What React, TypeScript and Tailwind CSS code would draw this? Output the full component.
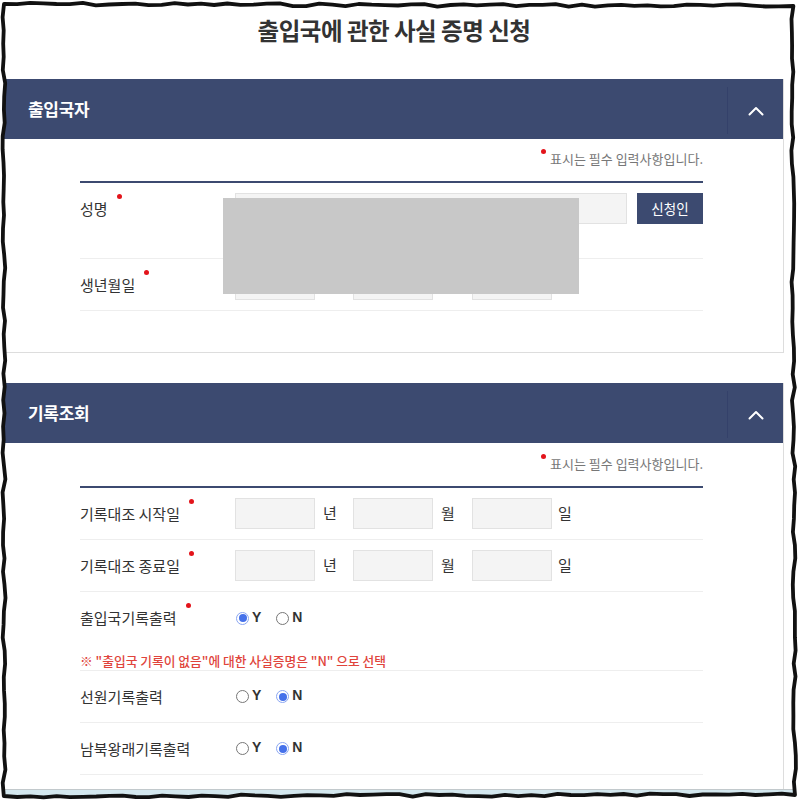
import React from "react";

const NAVY = "bg-[#3c4a70]";
const font = { fontFamily: '"Noto Sans CJK KR", "Noto Sans", sans-serif' };

function Dot() {
    return <span className="inline-block w-[5px] h-[5px] rounded-full bg-[#e3141b] ml-[9px] mt-[-5px] shrink-0" />;
}

function Label({ text, required }: { text: string; required?: boolean }) {
    return (
        <div className="w-[155px] shrink-0 flex items-start text-[15px] leading-[20px] text-[#333]">
            <span>{text}</span>
            {required && <Dot />}
        </div>
    );
}

function Box({ className = "" }: { className?: string }) {
    return <div className={`h-[31px] bg-[#f4f4f4] border border-[#e2e2e2] ${className}`} />;
}

function DateInputs() {
    return (
        <div className="flex items-center text-[15px] text-[#333]">
            <Box className="w-[80px]" />
            <span className="w-[38px] pl-[8px]">년</span>
            <Box className="w-[80px]" />
            <span className="w-[39px] pl-[8px]">월</span>
            <Box className="w-[80px]" />
            <span className="pl-[6px]">일</span>
        </div>
    );
}

function Radio({ checked, label }: { checked?: boolean; label: string }) {
    return (
        <div className="flex items-center">
            {checked ? (
                <span className="w-[13px] h-[13px] rounded-full border border-[#8aa6f2] bg-white flex items-center justify-center">
                    <span className="w-[8px] h-[8px] rounded-full bg-[#4571ea]" />
                </span>
            ) : (
                <span className="w-[13px] h-[13px] rounded-full border border-[#777] bg-white" />
            )}
            <span className="ml-[3px] text-[14px] font-bold text-[#333] leading-none -mt-[3px]" style={{ fontFamily: '"Liberation Sans", Arial, sans-serif' }}>{label}</span>
        </div>
    );
}

function YN({ yes }: { yes: boolean }) {
    return (
        <div className="flex items-center gap-[15px] pl-[1px]">
            <Radio checked={yes} label="Y" />
            <Radio checked={!yes} label="N" />
        </div>
    );
}

function Row({ children, className = "" }: { children: React.ReactNode; className?: string }) {
    return <div className={`flex items-center h-[52px] border-b border-[#eeeeee] ${className}`}>{children}</div>;
}

function Chevron() {
    return (
        <svg width="16" height="10" viewBox="0 0 16 10" fill="none">
            <path d="M1.5 8.5 L8 2 L14.5 8.5" stroke="#fff" strokeWidth="2" strokeLinecap="round" strokeLinejoin="round" />
        </svg>
    );
}

function PanelHeader({ title }: { title: string }) {
    return (
        <div className={`${NAVY} h-[60px] flex items-center`}>
            <h2 className="flex-1 pl-[24px] text-white text-[17px] font-bold tracking-[-0.3px]">{title}</h2>
            <div className="h-[47px] w-[56px] border-l border-[#34416a] flex items-center justify-center mt-[3px]">
                <Chevron />
            </div>
        </div>
    );
}

function RequiredNote() {
    return (
        <div className="flex justify-end items-start text-[13px] leading-[16px] text-[#777]">
            <span className="inline-block w-[5px] h-[5px] rounded-full bg-[#e3141b] mr-[4px] mt-[-2px]" />
            <span>표시는 필수 입력사항입니다.</span>
        </div>
    );
}

// wavy hand-drawn frame
function Frame() {
    let seed = 7;
    const rnd = () => {
        seed = (seed * 9301 + 49297) % 233280;
        return seed / 233280 - 0.5;
    };
    const corners: [number, number][] = [[4, 4], [792, 6], [795, 795], [4, 796]];
    const pts: string[] = [];
    for (let c = 0; c < 4; c++) {
        const [x1, y1] = corners[c];
        const [x2, y2] = corners[(c + 1) % 4];
        const n = 60;
        for (let i = 0; i < n; i++) {
            const t = i / n;
            const x = x1 + (x2 - x1) * t + (c % 2 === 1 ? rnd() * 3 : 0);
            const y = y1 + (y2 - y1) * t + (c % 2 === 0 ? rnd() * 3 : 0);
            pts.push(`${x.toFixed(1)},${y.toFixed(1)}`);
        }
    }
    const inner = "M" + pts.join(" L") + " Z";
    return (
        <svg className="absolute inset-0 pointer-events-none" width="800" height="800" viewBox="0 0 800 800">
            <path d={`M0 0 H800 V800 H0 Z ${inner}`} fill="#fff" fillRule="evenodd" />
            <path d={inner} fill="none" stroke="#111" strokeWidth="3.8" strokeLinejoin="round" />
        </svg>
    );
}

export default function App() {
    return (
        <div className="relative w-[800px] h-[800px] overflow-hidden bg-white" style={font}>
            <div className="w-[784px] flex flex-col">
                <h1 className="h-[79px] pl-[4px] flex items-center justify-center pb-[18px] text-[23.5px] font-bold text-[#333] tracking-[-0.5px]">
                    출입국에 관한 사실 증명 신청
                </h1>

                <section className="ml-[4px] border-r border-b border-[#dddddd]">
                    <PanelHeader title="출입국자" />
                    <div className="pl-[76px] pr-[80px] pt-[12px] pb-[41px]">
                        <RequiredNote />
                        <div className="mt-[14px] border-t-2 border-[#3c4a70]" />
                        <div className="relative">
                            <div className="flex items-start h-[76px] pt-[10px] border-b border-[#eeeeee]">
                                <div className="h-[31px] flex items-center"><Label text="성명" required /></div>
                                <Box className="w-[392px]" />
                                <button className={`${NAVY} ml-[10px] w-[66px] h-[31px] text-white text-[13.5px]`}>신청인</button>
                            </div>
                            <Row>
                                <Label text="생년월일" required />
                                <DateInputs />
                            </Row>
                            <div className="absolute left-[143px] top-[15px] w-[356px] h-[96px] bg-[#c8c8c8]" />
                        </div>
                    </div>
                </section>

                <section className="ml-[4px] mt-[30px] border-r border-[#dddddd] h-[406px]">
                    <PanelHeader title="기록조회" />
                    <div className="pl-[76px] pr-[80px] pt-[13px]">
                        <RequiredNote />
                        <div className="mt-[14px] border-t-2 border-[#3c4a70]" />
                        <Row>
                            <Label text="기록대조 시작일" required />
                            <DateInputs />
                        </Row>
                        <Row>
                            <Label text="기록대조 종료일" required />
                            <DateInputs />
                        </Row>
                        <div className="border-b border-[#eeeeee] pb-[1px]">
                            <div className="flex items-center h-[52px]">
                                <Label text="출입국기록출력" required />
                                <YN yes />
                            </div>
                            <p className="mt-[9px] h-[16px] text-[12.75px] leading-[16px] text-[#e0443c] font-medium">
                                ※ "출입국 기록이 없음"에 대한 사실증명은 "N" 으로 선택
                            </p>
                        </div>
                        <Row>
                            <Label text="선원기록출력" />
                            <YN yes={false} />
                        </Row>
                        <Row>
                            <Label text="남북왕래기록출력" />
                            <YN yes={false} />
                        </Row>
                    </div>
                </section>
            </div>
            <div className="absolute left-0 right-0 top-[789px] h-[11px] bg-[#d3e7ee] border-t border-[#c2c9cc]" />
            <Frame />
        </div>
    );
}
